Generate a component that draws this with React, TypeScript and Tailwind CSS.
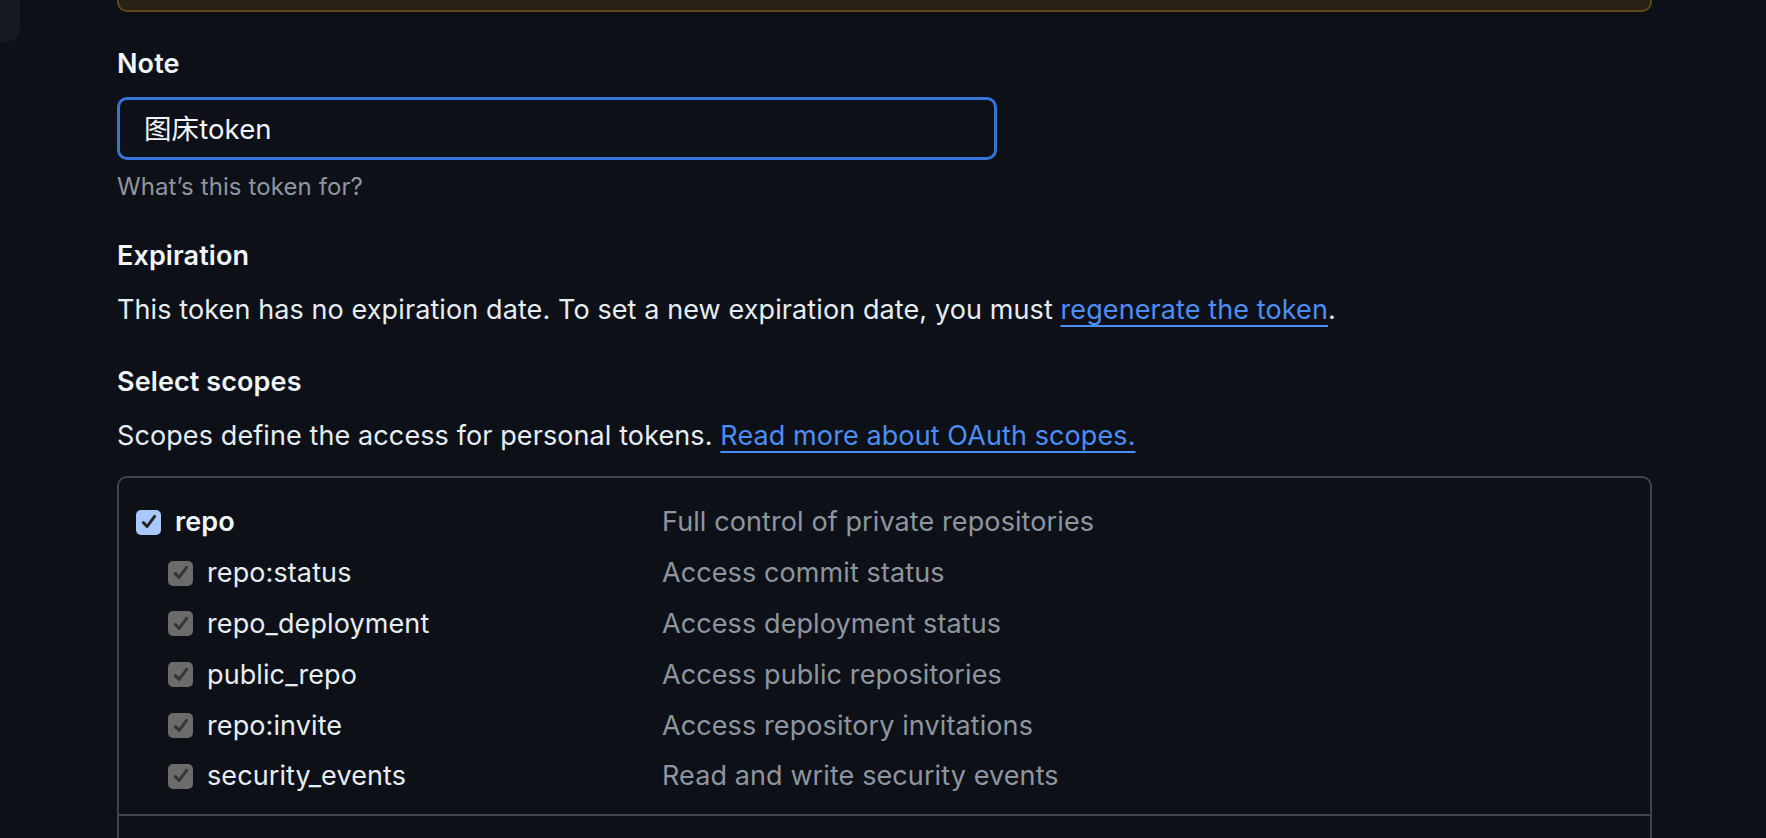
import React from 'react';

interface Scope {
  name: string;
  description: string;
}

const repoChildren: Scope[] = [
  { name: 'repo:status', description: 'Access commit status' },
  { name: 'repo_deployment', description: 'Access deployment status' },
  { name: 'public_repo', description: 'Access public repositories' },
  { name: 'repo:invite', description: 'Access repository invitations' },
  { name: 'security_events', description: 'Read and write security events' },
];

function Check({ parent }: { parent?: boolean }) {
  return (
    <span
      className={`flex h-[25px] w-[25px] shrink-0 items-center justify-center rounded-[5px] ${
        parent ? 'bg-[#a9c9fc]' : 'bg-[#6b6b6b]'
      }`}
    >
      <svg viewBox="0 0 16 16" className="h-[20px] w-[20px]">
        <path
          d="M3.5 8.5 L6.5 11.5 L12.5 3.5"
          fill="none"
          stroke={parent ? '#262626' : '#363636'}
          strokeWidth="2.4"
          strokeLinecap="round"
          strokeLinejoin="round"
        />
      </svg>
    </span>
  );
}

function ScopeRow({ scope, parent }: { scope: Scope; parent?: boolean }) {
  return (
    <div className="flex h-[50.8px] items-center">
      <div className={`flex w-[526px] items-center gap-[14px] ${parent ? '' : 'pl-[32px]'}`}>
        <Check parent={parent} />
        <span className={parent ? 'font-semibold text-[#f0f6fc]' : 'text-[#e6edf3]'}>{scope.name}</span>
      </div>
      <span className="text-[#8d96a0]">{scope.description}</span>
    </div>
  );
}

export default function App() {
  return (
    <div
      className="flex h-[838px] gap-[97px] overflow-hidden bg-[#0d1117] text-[27px] leading-[38px] tracking-[0.1px] text-[#e6edf3]"
      style={{ fontFamily: 'Inter, "Noto Sans CJK SC", sans-serif' }}
    >
      <div className="w-[20px] shrink-0">
        <div className="h-[42px] rounded-br-[14px] bg-[#151a22]" />
      </div>

      <div className="w-[1535px] shrink-0">
        <div className="h-[12px] rounded-b-[10px] border-x-2 border-b-2 border-[#5e4719] bg-[#282216]" />

        <div className="mt-[33px] font-semibold text-[#f0f6fc]">Note</div>
        <div className="mt-[14px] flex h-[63px] w-[880px] items-center rounded-[10px] border-[3px] border-[#3873dc] px-[24px] text-[27.5px] text-[#f0f6fc]">
          图床token
        </div>
        <div className="mt-[10px] text-[24px] leading-[34px] text-[#8d96a0]">What’s this token for?</div>

        <div className="mt-[33px] font-semibold text-[#f0f6fc]">Expiration</div>
        <p className="mt-[16px]">
          This token has no expiration date. To set a new expiration date, you must{' '}
          <a className="text-[#4c8ef7] underline decoration-2 underline-offset-[6px]">regenerate the token</a>.
        </p>

        <div className="mt-[34px] font-semibold text-[#f0f6fc]">Select scopes</div>
        <p className="mt-[16px]">
          Scopes define the access for personal tokens.{' '}
          <a className="text-[#4c8ef7] underline decoration-2 underline-offset-[6px]">Read more about OAuth scopes.</a>
        </p>

        <div className="mt-[21px] rounded-[10px] border-2 border-[#3d444d]">
          <div className="pl-[17px] pt-[19px] pb-[12px]">
            <ScopeRow scope={{ name: 'repo', description: 'Full control of private repositories' }} parent />
            {repoChildren.map((s) => (
              <ScopeRow key={s.name} scope={s} />
            ))}
          </div>
          <div className="h-[80px] border-t-2 border-[#3d444d]" />
        </div>
      </div>
    </div>
  );
}
